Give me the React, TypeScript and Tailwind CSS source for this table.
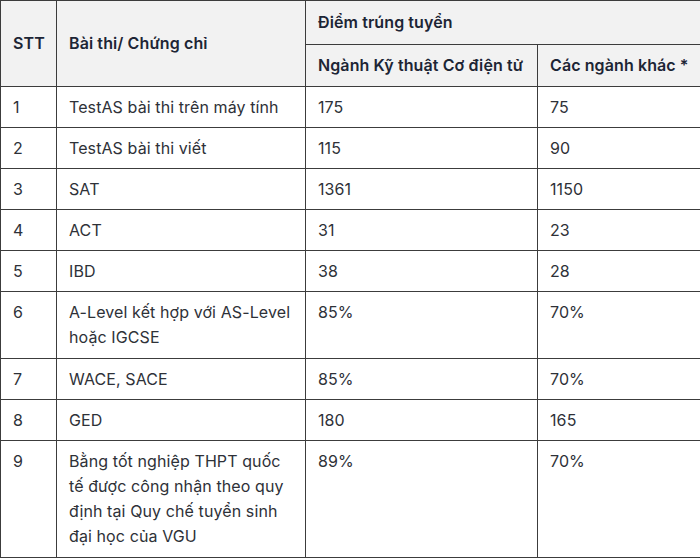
const rows: [string, string[], string, string][] = [
  ['1', ['TestAS bài thi trên máy tính'], '175', '75'],
  ['2', ['TestAS bài thi viết'], '115', '90'],
  ['3', ['SAT'], '1361', '1150'],
  ['4', ['ACT'], '31', '23'],
  ['5', ['IBD'], '38', '28'],
  ['6', ['A-Level kết hợp với AS-Level', 'hoặc IGCSE'], '85%', '70%'],
  ['7', ['WACE, SACE'], '85%', '70%'],
  ['8', ['GED'], '180', '165'],
  [
    '9',
    ['Bằng tốt nghiệp THPT quốc', 'tế được công nhận theo quy', 'định tại Quy chế tuyển sinh', 'đại học của VGU'],
    '89%',
    '70%',
  ],
];

const th = 'border border-[#3c3c3c] bg-[#f2f2f2] px-3 text-left font-semibold whitespace-nowrap text-[#1d2535]';

export default function App() {
  return (
    <div className="h-[558px] w-[700px] bg-white font-['Inter','Noto_Sans',sans-serif] text-[16px] leading-[25px] tracking-[0.1px] text-[#2e3138]">
      <table className="w-[700px] table-fixed border-collapse">
        <colgroup>
          <col className="w-[56px]" />
          <col className="w-[249px]" />
          <col className="w-[232px]" />
          <col className="w-[163px]" />
        </colgroup>
        <thead>
          <tr>
            <th rowSpan={2} className={`${th} align-middle`}>
              STT
            </th>
            <th rowSpan={2} className={`${th} align-middle`}>
              Bài thi/ Chứng chỉ
            </th>
            <th colSpan={2} className={`${th} py-[9px]`}>
              Điểm trúng tuyển
            </th>
          </tr>
          <tr>
            <th className={`${th} py-2`}>Ngành Kỹ thuật Cơ điện tử</th>
            <th className={`${th} py-2`}>Các ngành khác *</th>
          </tr>
        </thead>
        <tbody>
          {rows.map(([no, name, a, b]) => {
            const td = `border border-[#3c3c3c] px-3 pt-2 align-top ${name.length > 1 ? 'pb-2' : 'pb-[7px]'}`;
            return (
              <tr key={no}>
                <td className={td}>{no}</td>
                <td className={td}>
                  {name.map((line) => (
                    <div key={line}>{line}</div>
                  ))}
                </td>
                <td className={td}>{a}</td>
                <td className={td}>{b}</td>
              </tr>
            );
          })}
        </tbody>
      </table>
    </div>
  );
}
